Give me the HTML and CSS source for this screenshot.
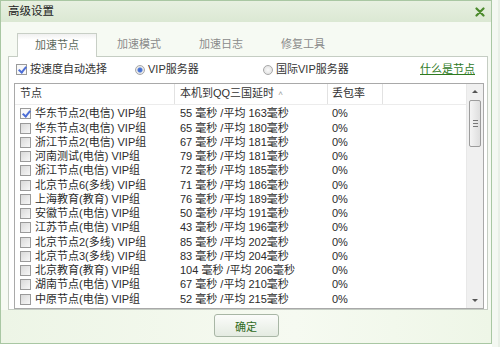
FILE: index.html
```html
<!DOCTYPE html>
<html lang="zh-CN">
<head>
  <meta charset="UTF-8">
  <title>高级设置</title>
  <link rel="stylesheet" href="styles.css">
</head>
<body>
  <div class="screen">
    <div class="dialog">
      <div class="titlebar">
        <span class="title">高级设置</span>
        <svg class="close" width="10" height="10" viewBox="0 0 10 10">
          <path d="M1.5 1.5 L8.5 8.5 M8.5 1.5 L1.5 8.5" stroke="#4b8a2c" stroke-width="2.2" stroke-linecap="round"/>
        </svg>
      </div>

      <div class="tabs">
        <div class="tab active">加速节点</div>
        <div class="tab">加速模式</div>
        <div class="tab">加速日志</div>
        <div class="tab">修复工具</div>
      </div>

      <div class="panel">
        <div class="options">
          <label class="opt opt-auto"><span class="check on"></span>按速度自动选择</label>
          <label class="opt opt-vip"><span class="radio on"></span>VIP服务器</label>
          <label class="opt opt-intl"><span class="radio"></span>国际VIP服务器</label>
          <a class="help" href="#">什么是节点</a>
        </div>

        <div class="list">
          <div class="table">
            <div class="row head">
              <div class="cell c-name">节点</div>
              <div class="cell c-ping">本机到QQ三国延时 <span class="sort">˄</span></div>
              <div class="cell c-loss">丢包率</div>
              <div class="cell c-rest"></div>
            </div>
            <div class="rows" id="rows"></div>
          </div>
          <div class="scrollbar">
            <div class="arrow up"></div>
            <div class="thumb"><i></i><i></i><i></i></div>
            <div class="track"></div>
            <div class="arrow down"></div>
          </div>
        </div>
      </div>

      <div class="footer">
        <button class="ok">确定</button>
      </div>
    </div>
    <div class="side"></div>
  </div>

  <script>
    // node name, ping, average
    const nodes = [
      ["华东节点2(电信) VIP组", 55, 163],
      ["华东节点3(电信) VIP组", 65, 180],
      ["浙江节点2(电信) VIP组", 67, 181],
      ["河南测试(电信) VIP组", 79, 181],
      ["浙江节点(电信) VIP组", 72, 185],
      ["北京节点6(多线) VIP组", 71, 186],
      ["上海教育(教育) VIP组", 76, 189],
      ["安徽节点(电信) VIP组", 50, 191],
      ["江苏节点(电信) VIP组", 43, 196],
      ["北京节点2(多线) VIP组", 85, 202],
      ["北京节点3(多线) VIP组", 83, 204],
      ["北京教育(教育) VIP组", 104, 206],
      ["湖南节点(电信) VIP组", 67, 210],
      ["中原节点(电信) VIP组", 52, 215]
    ];

    const rows = document.getElementById('rows');
    nodes.forEach((n, i) => {
      const row = document.createElement('div');
      row.className = 'row';
      row.innerHTML =
        '<div class="cell c-name"><span class="check' + (i === 0 ? ' on' : '') + '"></span>' + n[0] + '</div>' +
        '<div class="cell c-ping">' + n[1] + ' 毫秒 /平均 ' + n[2] + '毫秒</div>' +
        '<div class="cell c-loss">0%</div>' +
        '<div class="cell c-rest"></div>';
      rows.appendChild(row);
    });
  </script>
</body>
</html>
```

FILE: styles.css
```css
body {
  margin: 0;
  font-family: "Liberation Sans", "Noto Sans CJK SC", sans-serif;
  font-size: 11px;
  line-height: 13px;
  color: #2b2b2b;
  background: #fff;
  overflow: hidden;
}

.screen {
  width: 500px;
  height: 347px;
  display: flex;
  overflow: hidden;
}

.dialog {
  width: 490px;
  height: 342px;
  border: 1px solid #a9c7a3;
  background: #f6faf3;
  display: flex;
  flex-direction: column;
  flex-shrink: 0;
}

.side {
  flex: 1;
  border-left: 6px solid #f4f8f2;
  background: #e8efe6;
}

.titlebar {
  height: 21px;
  display: flex;
  align-items: center;
  justify-content: space-between;
  padding: 0 6px 0 7px;
  background: linear-gradient(#e7f0e1, #dbe8d3);
}

.title {
  font-size: 11.5px;
  color: #222;
}

.close {
  margin-top: 1px;
}

/* tabs */
.tabs {
  display: flex;
  gap: 2px;
  margin-top: 11px;
  padding-left: 16px;
  height: 23px;
}

.tab {
  width: 80px;
  display: flex;
  align-items: center;
  justify-content: center;
  color: #8a8a8a;
  font-size: 11px;
}

.tab.active {
  background: linear-gradient(#f0f0f0, #fff 6px);
  border: 1px solid #c8cfc6;
  border-bottom: none;
  color: #5c6a5c;
  position: relative;
  z-index: 1;
  height: 24px;
  box-sizing: border-box;
}

/* panel */
.panel {
  margin: 0 0 0 7px;
  width: 480px;
  height: 254px;
  box-sizing: border-box;
  background: #fff;
  border: 1px solid #c5cdc3;
  display: flex;
  flex-direction: column;
}

.options {
  height: 26px;
  display: flex;
  align-items: center;
  padding-left: 7px;
}

.opt {
  display: flex;
  align-items: center;
  color: #333;
}

.opt-auto { width: 119px; }
.opt-vip { width: 128px; }
.opt-intl { flex: 1; }

.help {
  color: #2f7a1f;
  margin-right: 12px;
  text-decoration: underline;
}

.check {
  width: 11px;
  height: 11px;
  box-sizing: border-box;
  border: 1px solid #9a9a9a;
  background: linear-gradient(135deg, #d9d9d9, #f7f7f7);
  margin-right: 3px;
  flex-shrink: 0;
  position: relative;
}

.check.on {
  background: #f8f8f8;
}

.check.on::after {
  content: "";
  position: absolute;
  left: 3px;
  top: 0px;
  width: 3px;
  height: 6px;
  border: solid #4d6ed6;
  border-width: 0 2px 2px 0;
  transform: rotate(40deg);
}

.radio {
  width: 10px;
  height: 10px;
  box-sizing: border-box;
  border-radius: 50%;
  border: 1px solid #a8a8a8;
  background: radial-gradient(#fafafa, #dcdcdc);
  margin-right: 3px;
}

.radio.on {
  background: radial-gradient(circle, #3f68c9 0, #4f7ad8 2px, #e8e8e8 3px);
}

/* list */
.list {
  margin: 0 3px 0 5px;
  height: 227px;
  border: 1px solid #a9a9a9;
  display: flex;
  background: #fff;
}

.table {
  flex: 1;
  display: flex;
  flex-direction: column;
}

.row {
  display: flex;
  height: 14.25px;
  align-items: center;
  white-space: nowrap;
}

.row.head {
  height: 20px;
  border-bottom: 1px solid #ececec;
  color: #333;
}

.rows {
  padding-top: 2px;
}

.cell {
  box-sizing: border-box;
  height: 100%;
  display: flex;
  align-items: center;
}

.head .cell {
  border-right: 1px solid #e2e2e2;
}

.c-name { width: 160px; padding-left: 5px; }
.c-ping { width: 153px; padding-left: 5px; }
.c-loss { width: 55px; padding-left: 4px; }
.c-rest { flex: 1; border-right: none !important; }

.c-name .check {
  margin-right: 4px;
}

.sort {
  font-size: 8px;
  color: #999;
  margin-left: 4px;
  align-self: flex-start;
  margin-top: 3px;
}

.scrollbar {
  width: 16px;
  display: flex;
  flex-direction: column;
  align-items: center;
  background: #f0f0f0;
  border-left: 1px solid #e8e8e8;
}

.arrow {
  height: 16px;
  width: 100%;
  position: relative;
}

.arrow::after {
  content: "";
  position: absolute;
  left: 5px;
  border-left: 3px solid transparent;
  border-right: 3px solid transparent;
}

.arrow.up::after {
  top: 6px;
  border-bottom: 3px solid #555;
}

.arrow.down::after {
  top: 7px;
  border-top: 3px solid #555;
}

.thumb {
  width: 12px;
  height: 47px;
  box-sizing: border-box;
  border: 1px solid #9c9c9c;
  border-radius: 2px;
  background: linear-gradient(90deg, #f4f4f4, #dedede);
  display: flex;
  flex-direction: column;
  align-items: center;
  justify-content: center;
  gap: 2px;
}

.thumb i {
  width: 5px;
  height: 1px;
  background: #777;
}

.track {
  flex: 1;
}

/* footer */
.footer {
  flex: 1;
  display: flex;
  justify-content: center;
  align-items: flex-start;
  padding-top: 4px;
  background: linear-gradient(90deg, #edf5e6, #f6faf1 60%, #eef6e7);
}

.ok {
  width: 65px;
  height: 23px;
  border: 1px solid #a8b6a5;
  border-radius: 3px;
  background: linear-gradient(#fbfcfa, #e4ebe1);
  font-family: inherit;
  font-size: 11px;
  color: #2f6b22;
  padding: 0;
}
```
